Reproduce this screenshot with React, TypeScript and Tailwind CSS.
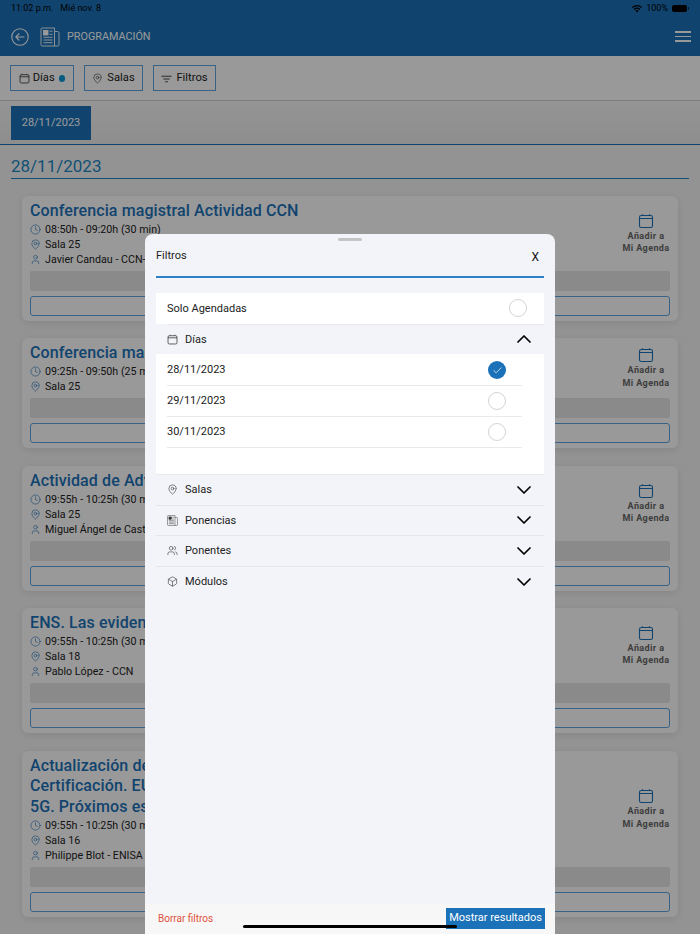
import React from 'react';
import { ChevronDown, ChevronUp, Check, Box, Users, MapPin, Clock, User } from 'lucide-react';

const font = { fontFamily: 'Roboto, sans-serif' };

const sessions = [
  {
    title: ['Conferencia magistral Actividad CCN'],
    time: '08:50h - 09:20h (30 min)',
    room: 'Sala 25',
    speaker: 'Javier Candau - CCN-CERT',
    gap: 'mb-[17px]',
  },
  {
    title: ['Conferencia magistral Actividad CCN'],
    time: '09:25h - 09:50h (25 min)',
    room: 'Sala 25',
    gap: 'mb-[18px]',
  },
  {
    title: ['Actividad de Adversarios'],
    time: '09:55h - 10:25h (30 min)',
    room: 'Sala 25',
    speaker: 'Miguel Ángel de Castro',
    gap: 'mb-[17px]',
  },
  {
    title: ['ENS. Las evidencias'],
    time: '09:55h - 10:25h (30 min)',
    room: 'Sala 18',
    speaker: 'Pablo López - CCN',
    gap: 'mb-[18px]',
  },
  {
    title: ['Actualización de esquemas de', 'Certificación. EUCC, EUCS y', '5G. Próximos escenarios'],
    time: '09:55h - 10:25h (30 min)',
    room: 'Sala 16',
    speaker: 'Philippe Blot - ENISA',
    gap: 'mb-[18px]',
  },
];

const CalendarIcon = ({ className }: { className?: string }) => (
  <svg viewBox="0 0 16 16" fill="none" stroke="currentColor" strokeWidth="1.1" className={className}>
    <rect x="1.5" y="2.5" width="13" height="12" rx="1.8" />
    <path d="M1.5 5.5h13M4.5 1.2v1.3M11.5 1.2v1.3" />
  </svg>
);

const NewsIcon = ({ className }: { className?: string }) => (
  <svg viewBox="0 0 20 20" fill="none" stroke="currentColor" strokeWidth="0.9" className={className}>
    <path d="M1 2.500A1.500 1.500 0 0 1 2.500 1h12v18h-12A1.500 1.500 0 0 1 1 17.500z" />
    <path d="M14.500 4.500h3a1.500 1.500 0 0 1 1.500 1.500v11.500a1.500 1.500 0 0 1-1.500 1.500h-3" />
    <rect x="3.500" y="3.500" width="4.500" height="4.500" fill="currentColor" />
    <path d="M9.500 4.200h3M9.500 7.300h3M3.500 10.300h9M3.500 13h9M3.500 15.700h9" />
  </svg>
);

const Radio = ({ checked }: { checked?: boolean }) =>
  checked ? (
    <span className="flex h-[18px] w-[18px] items-center justify-center rounded-full bg-[#1c72b9] text-white">
      <Check size={11} strokeWidth={1.5} />
    </span>
  ) : (
    <span className="h-[18px] w-[18px] rounded-full border border-[#d4d4d4] bg-white" />
  );

const SessionCard = ({ item }: { item: (typeof sessions)[number] }) => (
  <div className={`rounded-md bg-white px-2 pb-[5px] pt-[5px] shadow-[0_2px_8px_rgba(0,0,0,0.1)] ${item.gap}`}>
    <div className="flex items-center justify-between">
      <div className="min-w-0">
        {item.title.map((line) => (
          <div key={line} className="text-[16px] font-medium leading-[20.500px] tracking-[0.1px] text-[#1c72b9]">
            {line}
          </div>
        ))}
        <div className="mt-[0.500px] text-[10.700px] leading-[15px] text-[#222]">
          <div className="flex items-center gap-[4px]">
            <Clock size={11} strokeWidth={1.300} className="text-[#1c72b9]" />
            {item.time}
          </div>
          <div className="flex items-center gap-[4px]">
            <MapPin size={11} strokeWidth={1.300} className="text-[#1c72b9]" />
            {item.room}
          </div>
          {item.speaker && (
            <div className="flex items-center gap-[4px]">
              <User size={11} strokeWidth={1.300} className="text-[#1c72b9]" />
              {item.speaker}
            </div>
          )}
        </div>
      </div>
      <div className="mr-[-1px] flex w-[50px] flex-col items-center text-center text-[9px] font-bold leading-[12.500px] tracking-[0.4px] text-[#666]">
        <CalendarIcon className="mb-[1px] h-[16px] w-[16px] text-[#1c72b9]" />
        <span>Añadir a</span>
        <span className="whitespace-nowrap">Mi Agenda</span>
      </div>
    </div>
    <div className="mt-[4px] h-[20px] rounded-[2px] bg-[#e6e6e6]" />
    <div className="mt-[5px] h-[20px] rounded-[3px] border border-[#5ea4e0]" />
  </div>
);

const AccordionRow = ({ icon, label, last }: { icon: React.ReactNode; label: string; last?: boolean }) => (
  <div className={`flex h-[30.500px] items-center px-[11px] ${last ? '' : 'border-b border-[#e5e5ea]'}`}>
    <span className="flex w-[18px] items-center text-[#333]">{icon}</span>
    <span className="pt-[1px] text-[11px] text-[#222]">{label}</span>
    <ChevronDown size={24} strokeWidth={1.700} className="my-[-4px] ml-auto mr-[-3px] text-black" />
  </div>
);

export default function App() {
  return (
    <div style={font} className="relative h-[934px] w-[700px] overflow-hidden bg-[#f6f6f6]">
      {/* page behind the sheet */}
      <header className="h-[56px] bg-[#1c72b9] text-white">
        <div className="flex h-[17px] items-center justify-between px-[11px] text-[9px] text-black">
          <div className="flex gap-[7px]">
            <span>11:02 p.m.</span>
            <span>Mié nov. 8</span>
          </div>
          <div className="flex items-center gap-[3px]">
            <svg viewBox="0 0 14 11" className="h-[8px] w-[10px]" fill="black">
              <path d="M7 10.500 4.700 8a3.300 3.300 0 0 1 4.600 0zM3.500 6.800 2.200 5.400a6.900 6.900 0 0 1 9.600 0l-1.300 1.400a5 5 0 0 0-7 0zM1 4.200-.200 2.900a10.500 10.500 0 0 1 14.400 0L13 4.200a8.700 8.700 0 0 0-12 0z" />
            </svg>
            <span className="ml-[1px]">100%</span>
            <span className="ml-[1px] h-[7px] w-[15px] rounded-[2px] bg-black" />
            <span className="ml-[-2px] h-[3px] w-[1px] bg-black/60" />
          </div>
        </div>
        <div className="flex h-[39px] items-center pl-[11px] pr-[9px]">
          <svg viewBox="0 0 18 18" fill="none" stroke="white" strokeWidth="1.100" className="h-[18px] w-[18px]">
            <circle cx="9" cy="9" r="8.200" />
            <path d="M13.500 9H5M8.300 5.500 4.800 9l3.500 3.500" />
          </svg>
          <NewsIcon className="ml-[11px] h-[20px] w-[20px]" />
          <span className="ml-[7px] pt-[1px] text-[10.800px]">PROGRAMACIÓN</span>
          <div className="ml-auto flex flex-col gap-[3px]">
            <span className="h-[1.500px] w-[16px] bg-white" />
            <span className="h-[1.500px] w-[16px] bg-white" />
            <span className="h-[1.500px] w-[16px] bg-white" />
          </div>
        </div>
      </header>

      <div className="flex h-[44.500px] items-start gap-[10px] border-b border-[#d0d0d0] bg-white px-[10px] pt-[9px] text-[11.200px] text-[#222]">
        <div className="flex h-[26px] w-[64px] items-center justify-center gap-[3px] border border-[#5ea4e0] pt-[1px]">
          <CalendarIcon className="h-[11px] w-[11px]" />
          Días
          <span className="ml-[1px] h-[6.500px] w-[6.500px] rounded-full bg-[#0a9ad6]" />
        </div>
        <div className="flex h-[26px] w-[59px] items-center justify-center gap-[4px] border border-[#5ea4e0] pt-[1px]">
          <MapPin size={11} strokeWidth={1.200} />
          Salas
        </div>
        <div className="flex h-[26px] w-[63px] items-center justify-center gap-[4px] border border-[#5ea4e0] pt-[1px]">
          <svg viewBox="0 0 12 8" fill="none" stroke="currentColor" strokeWidth="0.900" className="h-[8px] w-[11px]">
            <path d="M.5 1h11M2.500 4h7M4.500 7h3" />
          </svg>
          Filtros
        </div>
      </div>

      <div className="h-[44px] border-b border-[#1c72b9] bg-gradient-to-b from-[#f8f8f8] to-[#ececec] pl-[11px] pt-[5px]">
        <div className="flex h-[34px] w-[80px] items-center justify-center bg-[#1c72b9] pt-[1px] text-[11px] text-white">
          28/11/2023
        </div>
      </div>

      <div className="mx-[11px] mt-[11px] h-[23px] border-b border-[#1c88c4] text-[17px] leading-[20px] text-[#1c88c4]">
        28/11/2023
      </div>

      <div className="mx-[22px] mt-[17px]">
        {sessions.map((item) => (
          <SessionCard key={item.time + item.room} item={item} />
        ))}
      </div>

      {/* dim layer */}
      <div className="absolute inset-0 bg-black/40" />

      {/* filters sheet */}
      <div className="absolute bottom-0 left-[145px] top-[234px] flex w-[410px] flex-col rounded-t-lg bg-[#f3f4f9]">
        <div className="mx-auto mt-[4px] h-[3px] w-[24px] rounded-full bg-[#c4c4c6]" />
        <div className="mx-[11px] flex h-[37px] items-center justify-between border-b-2 border-[#2f7fc4] pb-[8px] pt-[4px] text-[11px] text-[#222]">
          <span>Filtros</span>
          <span className="mr-[5px] text-[12px] text-[#111]">X</span>
        </div>

        <div className="mx-[11px] mt-[15px]">
          <div className="flex h-[30.500px] items-center justify-between bg-white pl-[11px] pr-[17px] text-[11px] text-[#222]">
            <span className="pt-[1px]">Solo Agendadas</span>
            <Radio />
          </div>
          <div className="ml-[11px] h-px bg-[#e9e9ee]" />
          <div className="flex h-[29.500px] items-center px-[11px]">
            <span className="flex w-[18px] items-center text-[#333]">
              <CalendarIcon className="h-[11px] w-[11px]" />
            </span>
            <span className="pt-[1px] text-[11px] text-[#222]">Días</span>
            <ChevronUp size={24} strokeWidth={1.700} className="my-[-4px] ml-auto mr-[-3px] text-black" />
          </div>
          <div className="h-[120px] bg-white pl-[11px] pr-[22px] pt-[1px] text-[11px] text-[#222]">
            {['28/11/2023', '29/11/2023', '30/11/2023'].map((day, i) => (
              <div key={day} className="flex h-[31px] items-center justify-between border-b border-[#e9e9ee] pr-[16px]">
                <span className="pt-[1px]">{day}</span>
                <Radio checked={i === 0} />
              </div>
            ))}
          </div>
          <div className="border-t border-[#e9e9ee]">
            <AccordionRow icon={<MapPin size={11} strokeWidth={1.300} />} label="Salas" />
            <AccordionRow icon={<NewsIcon className="h-[11px] w-[11px]" />} label="Ponencias" />
            <AccordionRow icon={<Users size={11} strokeWidth={1.300} />} label="Ponentes" />
            <AccordionRow icon={<Box size={11} strokeWidth={1.300} />} label="Módulos" last />
          </div>
        </div>

        <div className="mt-auto flex h-[30px] items-start justify-between bg-[#f7f7f7] pl-[13px] pr-[10px] pt-[4px]">
          <span className="mt-[3px] text-[10px] text-[#e0533d]">Borrar filtros</span>
          <span className="flex h-[21px] w-[99px] items-center justify-center bg-[#1c72b9] text-[11px] text-white">
            Mostrar resultados
          </span>
        </div>
      </div>

      {/* home indicator */}
      <div className="absolute bottom-[6px] left-[243px] h-[3px] w-[214px] rounded-full bg-black" />
    </div>
  );
}
